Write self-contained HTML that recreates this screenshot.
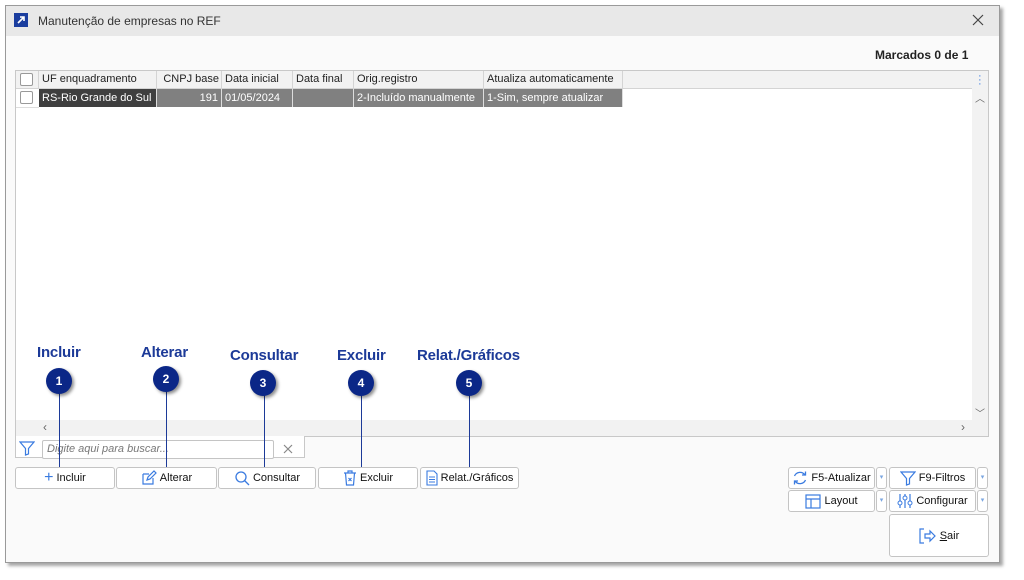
<!DOCTYPE html>
<html><head><meta charset="utf-8"><style>
*{box-sizing:border-box}
body{margin:0;width:1024px;height:580px;background:#fff;font-family:"Liberation Sans",sans-serif;font-size:11px;color:#222;position:relative;overflow:hidden}
.abs{position:absolute}
.win{left:5px;top:5px;width:995px;height:558px;background:#fafafa;border:1px solid #9a9a9a;box-shadow:3px 3px 3px rgba(0,0,0,.35)}
.title{left:6px;top:6px;width:993px;height:30px;background:#e8e8e8}
.grid{left:15px;top:70px;width:974px;height:367px;background:#fff;border:1px solid #c8c8c8}
.hdr{top:71px;height:18px;background:#f2f2f2;border-right:1px solid #d4d4d4;border-bottom:1px solid #d4d4d4;line-height:17px;padding-left:3px;font-size:11px;color:#222;white-space:nowrap}
.cell{top:89px;height:18px;line-height:18px;color:#fff;padding-left:3px;border-right:1px solid #ddd;white-space:nowrap;font-size:11px}
.btn{height:22px;top:467px;background:#fff;border:1px solid #c4c4c4;border-radius:3px;line-height:20px;text-align:center;font-size:11px;color:#111;display:flex;align-items:center;justify-content:center;gap:3px}
.dd{width:11px;height:22px;background:#fff;border:1px solid #c4c4c4;border-radius:3px;color:#7aa6e0;font-size:7px;text-align:center;line-height:20px}
.lbl{color:#1c3a98;font-weight:bold;font-size:15px;font-family:"Liberation Sans",sans-serif;letter-spacing:-.2px}
.circ{width:26px;height:26px;border-radius:13px;background:#0b2787;color:#fff;font-weight:bold;font-size:12px;text-align:center;line-height:26px;box-shadow:2px 2px 3px rgba(0,0,0,.45)}
.ln{width:1px;background:#1c3a98}
.cb{width:13px;height:13px;border:1px solid #999;background:#fff;border-radius:2px}
</style></head><body>
<div class="abs win"></div>
<div class="abs title"></div>
<div class="abs" style="left:14px;top:13px;width:14px;height:14px;background:#1a3d9e"><svg width="14" height="14"><path d="M4 10L10 4M6 4h4v4" stroke="#fff" stroke-width="1.6" fill="none"/></svg></div>
<div class="abs" style="left:38px;top:14px;font-size:12px;color:#333">Manutenção de empresas no REF</div>
<svg class="abs" style="left:972px;top:14px" width="12" height="12"><path d="M1 1L11 11M11 1L1 11" stroke="#444" stroke-width="1.2"/></svg>
<div class="abs" style="left:875px;top:48px;font-size:12px;font-weight:bold;color:#222">Marcados 0 de 1</div>

<div class="abs grid"></div>
<div class="abs hdr" style="left:16px;width:23px"></div>
<div class="abs cb" style="left:20px;top:73px"></div>
<div class="abs hdr" style="left:39px;width:118px">UF enquadramento</div>
<div class="abs hdr" style="left:157px;width:65px;text-align:right;padding-right:2px">CNPJ base</div>
<div class="abs hdr" style="left:222px;width:71px">Data inicial</div>
<div class="abs hdr" style="left:293px;width:61px">Data final</div>
<div class="abs hdr" style="left:354px;width:130px">Orig.registro</div>
<div class="abs hdr" style="left:484px;width:139px">Atualiza automaticamente</div>
<div class="abs hdr" style="left:623px;width:349px;border-right:none"></div>
<div class="abs" style="left:972px;top:71px;width:16px;height:365px;background:#f2f2f2"></div>
<div class="abs" style="left:978px;top:74px;color:#3a7be0;font-size:11px;line-height:4px">·<br>·<br>·</div>
<div class="abs" style="left:975px;top:90px;color:#666;font-size:10px">︿</div>
<div class="abs" style="left:975px;top:405px;color:#666;font-size:10px">﹀</div>
<div class="abs" style="left:16px;top:420px;width:956px;height:16px;background:#f2f2f2"></div>
<div class="abs" style="left:43px;top:420px;color:#666;font-size:12px">‹</div>
<div class="abs" style="left:961px;top:420px;color:#666;font-size:12px">›</div>

<div class="abs cb" style="left:20px;top:91px"></div>
<div class="abs cell" style="left:39px;width:118px;background:#3f3f3f">RS-Rio Grande do Sul</div>
<div class="abs cell" style="left:157px;width:65px;background:#808080;text-align:right;padding-right:3px">191</div>
<div class="abs cell" style="left:222px;width:71px;background:#808080">01/05/2024</div>
<div class="abs cell" style="left:293px;width:61px;background:#808080"></div>
<div class="abs cell" style="left:354px;width:130px;background:#808080">2-Incluído manualmente</div>
<div class="abs cell" style="left:484px;width:139px;background:#808080">1-Sim, sempre atualizar</div>
<div class="abs" style="left:16px;top:107px;width:23px;height:1px;background:#ddd"></div>

<div class="abs" style="left:15px;top:436px;width:290px;height:22px;border:1px solid #c8c8c8;border-top:none;background:#fff"></div>
<svg class="abs" style="left:19px;top:441px" width="16" height="15"><path d="M1 1h14L9.5 7.5V13L6.5 14V7.5Z" fill="none" stroke="#3a7be0" stroke-width="1.2"/></svg>
<div class="abs" style="left:42px;top:440px;width:232px;height:19px;border:1px solid #c4c4c4;border-radius:2px;background:#fff;font-style:italic;color:#777;padding-left:4px;line-height:17px">Digite aqui para buscar...</div>
<svg class="abs" style="left:283px;top:444px" width="10" height="10"><path d="M1 1L9 9M9 1L1 9" stroke="#888" stroke-width="1.2"/></svg>

<div class="abs btn" style="left:15px;width:100px"><span style="color:#3a7be0;font-size:16px">+</span>Incluir</div>
<div class="abs btn" style="left:116px;width:101px"><svg width="16" height="16"><path d="M2 4h6M2 4v10h10V8M6 10l1-3 6-6 2 2-6 6z" fill="none" stroke="#3a7be0" stroke-width="1.2"/></svg>Alterar</div>
<div class="abs btn" style="left:218px;width:98px"><svg width="16" height="16"><circle cx="7" cy="7" r="5" fill="none" stroke="#3a7be0" stroke-width="1.3"/><path d="M10.5 10.5L15 15" stroke="#3a7be0" stroke-width="1.3"/></svg>Consultar</div>
<div class="abs btn" style="left:318px;width:100px"><svg width="14" height="16"><path d="M1 3h12M5 3V1h4v2M2.5 3l1 12h7l1-12M5.5 8l3 3M8.5 8l-3 3" fill="none" stroke="#3a7be0" stroke-width="1.2"/></svg>Excluir</div>
<div class="abs btn" style="left:420px;width:99px"><svg width="12" height="16"><path d="M1 1h7l3 3v11H1zM3 7h6M3 9.5h6M3 12h6" fill="none" stroke="#3a7be0" stroke-width="1.1"/></svg>Relat./Gráficos</div>

<div class="abs btn" style="left:788px;width:87px"><svg width="16" height="16"><path d="M13 5A6 6 0 0 0 2.5 6M3 11a6 6 0 0 0 10.5-1M10 5h3.5V1.5M6 11H2.5v3.5" fill="none" stroke="#3a7be0" stroke-width="1.3"/></svg>F5-Atualizar</div>
<div class="abs dd" style="left:876px;top:467px">▾</div>
<div class="abs btn" style="left:889px;width:87px"><svg width="16" height="15"><path d="M1 1h14L9.5 7.5V13L6.5 14V7.5Z" fill="none" stroke="#3a7be0" stroke-width="1.2"/></svg>F9-Filtros</div>
<div class="abs dd" style="left:977px;top:467px">▾</div>
<div class="abs btn" style="left:788px;width:87px;top:490px"><svg width="16" height="15"><rect x="1" y="1" width="14" height="13" fill="none" stroke="#3a7be0" stroke-width="1.2"/><path d="M1 5h14M6 5v9" stroke="#3a7be0" stroke-width="1.2"/></svg>Layout</div>
<div class="abs dd" style="left:876px;top:490px">▾</div>
<div class="abs btn" style="left:889px;width:87px;top:490px"><svg width="16" height="16"><path d="M3 1v14M8 1v14M13 1v14" stroke="#3a7be0" stroke-width="1.2"/><circle cx="3" cy="10" r="2" fill="#fff" stroke="#3a7be0"/><circle cx="8" cy="5" r="2" fill="#fff" stroke="#3a7be0"/><circle cx="13" cy="10" r="2" fill="#fff" stroke="#3a7be0"/></svg>Configurar</div>
<div class="abs dd" style="left:977px;top:490px">▾</div>
<div class="abs btn" style="left:889px;width:100px;top:514px;height:43px"><svg width="18" height="16"><path d="M5 1H1v14h4M6 6h5V3l5 5-5 5v-3H6z" fill="none" stroke="#3a7be0" stroke-width="1.2"/></svg><span><u>S</u>air</span></div>

<div class="abs lbl" style="left:37px;top:344px">Incluir</div>
<div class="abs lbl" style="left:141px;top:344px">Alterar</div>
<div class="abs lbl" style="left:230px;top:347px">Consultar</div>
<div class="abs lbl" style="left:337px;top:347px">Excluir</div>
<div class="abs lbl" style="left:417px;top:347px">Relat./Gráficos</div>
<div class="abs ln" style="left:59px;top:392px;height:75px"></div>
<div class="abs ln" style="left:166px;top:390px;height:77px"></div>
<div class="abs ln" style="left:264px;top:394px;height:73px"></div>
<div class="abs ln" style="left:361px;top:394px;height:73px"></div>
<div class="abs ln" style="left:469px;top:394px;height:73px"></div>
<div class="abs circ" style="left:46px;top:368px">1</div>
<div class="abs circ" style="left:153px;top:366px">2</div>
<div class="abs circ" style="left:250px;top:370px">3</div>
<div class="abs circ" style="left:348px;top:370px">4</div>
<div class="abs circ" style="left:456px;top:370px">5</div>
</body></html>
